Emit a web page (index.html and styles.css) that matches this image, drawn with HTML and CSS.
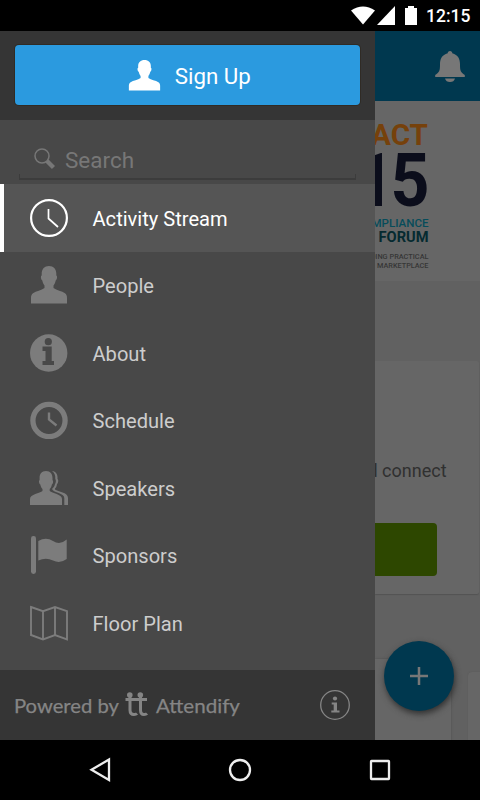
FILE: index.html
```html
<!DOCTYPE html>
<html lang="en">
<head>
<meta charset="utf-8">
<title>Activity Stream</title>
<link rel="stylesheet" href="styles.css">
</head>
<body>
<svg class="defs" aria-hidden="true">
  <symbol id="person" viewBox="0 0 38 38"><path d="M19 0C14.500 0 11.700 3 11.700 7.500V9.500C10.300 10 11 13.800 12.300 14.500C12.900 17 13.500 18.300 14.500 19.500V22C11.500 24.300 6 25 3 27.300C1.300 28.700 1 30 1 32V37.500H37V32C37 30 36.700 28.700 35 27.300C32 25 26.500 24.300 23.500 22V19.500C24.500 18.300 25.100 17 25.700 14.500C27 13.800 27.700 10 26.300 9.500V7.500C26.300 3 23.500 0 19 0Z"/></symbol>
</svg>
<div class="screen">
  <header class="status">
    <svg width="24" height="20" viewBox="0 0 24 20"><path d="M0 4.500Q12-3.500 24 4.500L12 18.500Z"/></svg>
    <svg width="18" height="20" viewBox="0 0 18 20"><path d="M18 0V19H0Z"/></svg>
    <svg width="12" height="20" viewBox="0 0 12 20"><path d="M3 0H9V2H12V19H0V2H3Z"/></svg>
    <span>12:15</span>
  </header>
  <main class="main">
    <aside class="drawer">
      <div class="account">
        <button class="signup"><svg width="33" height="31" viewBox="0 0 38 38" preserveAspectRatio="none"><use href="#person" width="38" height="38"/></svg>Sign Up</button>
      </div>
      <div class="search">
        <div class="field"><svg width="21" height="22" viewBox="0 0 21 22"><circle cx="8" cy="8" r="7" fill="none" stroke="#777" stroke-width="1.500"/><path d="M13 13L19.500 19.500" stroke="#777" stroke-width="4.400" /></svg><span>Search</span></div>
      </div>
      <nav class="menu">
        <div class="item active"><svg viewBox="0 0 38 38"><g fill="none" stroke="currentColor"><circle cx="19" cy="19" r="17.900" stroke-width="2.200"/><path d="M18.500 10V19.500L28 28" stroke-width="1.700"/></g></svg><span>Activity Stream</span></div>
        <div class="item"><svg><use href="#person"/></svg><span>People</span></div>
        <div class="item"><svg viewBox="0 0 38 38"><circle cx="18.700" cy="19" r="18.700"/><g fill="#484848"><circle cx="18.300" cy="7.700" r="3.600"/><path d="M12.500 12.500H21.700V27H24V31H12.500V27H15.500V17H12.500Z"/></g></svg><span>About</span></div>
        <div class="item"><svg viewBox="0 0 38 38"><g fill="none" stroke="currentColor"><circle cx="19" cy="19.500" r="16.100" stroke-width="5.300"/><path d="M19 11.500V18.500L26.500 24.500" stroke-width="2.400"/></g></svg><span>Schedule</span></div>
        <div class="item"><svg viewBox="0 0 38 38"><path d="M16 2C11.500 2 9.600 5 9.600 9V11C8.400 12 9.300 15 10.300 15.600C10.800 18 11.500 19 12.500 20V22C10 24.500 0 25 0 30V36H32V30C32 25 22 24.500 19.700 22V20C20.700 19 21.500 18 21.900 15.600C23 15 23.700 12 22.500 11V9C22.500 5 20.500 2 16 2Z"/><path d="M22 2C26 2.200 28 5.500 27.500 10C29 11 28 14.500 27 15C26.600 18 26 18.500 25 19.500V20.500C28 23 38 23 38 29V36H34.300V29C34.300 24 23.500 23.500 22.300 20.500V19.500C24 18 24.600 17 24.900 15.300C26 14 26.200 11 25.300 10C25.700 6 24 3.500 22 2Z"/></svg><span>Speakers</span></div>
        <div class="item"><svg viewBox="0 0 38 38"><rect x="1" y="0" width="5" height="38" rx="2.400"/><path d="M8.300 5Q16 .500 23 5T36.700 3.500V23Q30 28 23 24.500T8.300 24.500Z"/></svg><span>Sponsors</span></div>
        <div class="item"><svg viewBox="0 0 38 38"><path d="M1 3L13 7.200L25 3L37 7.200V35.500L25 31L13 35.500L1 31ZM13 7.200V35.500M25 3V31" fill="none" stroke="currentColor" stroke-width="1.900"/></svg><span>Floor Plan</span></div>
      </nav>
      <footer class="powered">
        <svg class="brand" width="230" height="40" viewBox="0 0 230 40">
          <text x="0" y="28" textLength="105" lengthAdjust="spacingAndGlyphs">Powered by</text>
          <g fill="none" stroke="currentColor" stroke-width="3"><path d="M111.500 14.500H133M116 11V25Q116 29.500 120 29.500Q122 29.500 123 28.500M126.500 11V25Q126.500 29.500 130 29.500Q132 29.500 133 28.500"/></g>
          <circle cx="115.800" cy="10" r="2.800"/><circle cx="126.300" cy="10" r="2.800"/>
          <text x="142" y="28" textLength="84" lengthAdjust="spacingAndGlyphs">Attendify</text>
        </svg>
        <svg width="30" height="30" viewBox="0 0 30 30"><circle cx="15" cy="15" r="14.300" fill="none" stroke="currentColor" stroke-width="1.300"/><circle cx="15" cy="8.500" r="2.100"/><path d="M11.700 12.500H17V20.500H19.500V22.500H11.300V20.500H13.700V14.500H11.700Z"/></svg>
      </footer>
    </aside>
    <section class="content">
      <div class="toolbar"><svg width="30" height="32" viewBox="0 0 30 32"><path d="M15 0C16.500 0 17.300 1 17.300 2.300C23 4 25 8 25 13C25 20 25.500 21 29.800 24V26H.200V24C4.500 21 5 20 5 13C5 8 7 4 12.700 2.300C12.700 1 13.500 0 15 0ZM10 27.500H20Q19 31 15 31T10 27.500Z"/></svg></div>
      <div class="banner">
        <svg width="105" height="180" viewBox="0 0 105 180">
          <text class="year"><tspan x="-22" y="105">1</tspan><tspan x="15.500" y="105" textLength="39" lengthAdjust="spacingAndGlyphs">5</tspan></text>
          <g text-anchor="end">
            <text class="orange" x="53" y="43.500" textLength="57" lengthAdjust="spacingAndGlyphs">ACT</text>
            <text class="teal" x="53.500" y="125.500" textLength="65" lengthAdjust="spacingAndGlyphs">OMPLIANCE</text>
            <text class="forum" x="53.500" y="140.500" textLength="50" lengthAdjust="spacingAndGlyphs">FORUM</text>
            <text class="small" x="53.500" y="158" textLength="58" lengthAdjust="spacingAndGlyphs">DING PRACTICAL</text>
            <text class="small" x="53.500" y="166.500" textLength="51.500" lengthAdjust="spacingAndGlyphs">MARKETPLACE</text>
          </g>
        </svg>
      </div>
      <div class="card welcome"><p>d connect</p><div class="green"></div></div>
      <div class="next"><div class="card left"></div><div class="card right"></div></div>
      <button class="fab"><svg width="18" height="18" viewBox="0 0 18 18"><path d="M9 0V18M0 9H18" stroke="#777" stroke-width="2.500"/></svg></button>
    </section>
  </main>
  <footer class="navbar">
    <svg width="22" height="26" viewBox="0 0 22 26"><path d="M20 2.500V23L2.500 12.800Z"/></svg>
    <svg width="24" height="26" viewBox="0 0 24 26"><circle cx="12" cy="13" r="10"/></svg>
    <svg width="22" height="26" viewBox="0 0 22 26"><rect x="2" y="4" width="18" height="18" rx=".500"/></svg>
  </footer>
</div>
</body>
</html>
```
FILE: styles.css
```css
* { box-sizing: border-box; }
body { margin: 0; font-family: Roboto, sans-serif; background: #000; }
svg { fill: currentColor; flex: none; display: block; }
button { border: 0; padding: 0; font: inherit; }
.defs { display: none; }
.screen { width: 480px; height: 800px; display: grid; grid-template-rows: 31px 709px 60px; overflow: hidden; }
.status { display: flex; justify-content: flex-end; align-items: flex-start; padding: 6px 10px 0 0; color: #fff; }
.status svg:nth-child(2) { margin-left: 2px; }
.status svg:nth-child(3) { margin-left: 10px; }
.status span { font-size: 17.500px; font-weight: 500; line-height: 21px; margin-left: 9px; width: 44px; }
.main { display: grid; grid-template-columns: 375px 105px; }
.drawer { display: grid; grid-template-rows: 89px 64px 486px 70px; background: #484848; }
.account { background: #353535; padding: 14px 15px 15px; }
.signup { width: 100%; height: 60px; border-radius: 4px; background: #2b9adf; color: #fff; font-size: 22.300px; display: flex; align-items: center; justify-content: center; gap: 13.500px; padding: 1px 0 0 4px; box-shadow: 0 0 0 1px #302b25; }
.signup svg { margin-top: -1px; }
.search { padding: 24px 19px 4px; }
.field { height: 36px; display: flex; align-items: center; padding: 0 0 2px 15px; color: #777; font-size: 22.500px; gap: 10px; border-bottom: 2px solid #3c3c3c; position: relative; }
.field svg { margin-top: -2px; }
.field::after { content: ""; position: absolute; inset: auto 0 0; height: 4px; border: solid #3c3c3c; border-width: 0 1px; }
.menu { display: flex; flex-direction: column; }
.item { flex: none; height: 67.500px; display: flex; align-items: center; padding-left: 30px; color: #7c7c7c; }
.item svg { width: 38px; height: 38px; }
.item span { margin-left: 24.500px; color: #cdcdcd; font-size: 20.100px; line-height: 26px; padding-top: 2px; }
.active { background: #555; color: #fff; border-left: 4px solid #fff; padding-left: 26px; height: 68px; margin-bottom: -.500px; }
.active span { color: #fff; }
.powered { background: #353535; color: #858585; display: flex; align-items: center; justify-content: space-between; padding: 0 25px 0 14px; }
.brand text { font: 19.500px Lato, sans-serif; stroke: currentColor; stroke-width: .25px; }
.content { background: #616161; position: relative; overflow: hidden; }
.toolbar { height: 70px; background: #00384f; color: #777; display: flex; justify-content: flex-end; padding: 20px 15px 0 0; }
.banner { height: 180px; background: #666; margin-bottom: 80px; }
.banner text { font-family: Roboto, sans-serif; font-weight: 700; }
.banner .orange { font-size: 30px; fill: #76410b; }
.banner .year { font-size: 74px; fill: #0b0d1b; }
.banner .teal { font-size: 11.500px; font-weight: 500; fill: #064c5a; }
.banner .forum { font-size: 15.500px; fill: #052a30; }
.banner .small { font-size: 7.300px; font-weight: 500; fill: #363636; }
.card { background: #666; box-shadow: 0 1px 1px #545454; }
.welcome { width: 104px; height: 233px; border-radius: 0 2px 2px 0; display: flex; flex-direction: column; align-items: flex-start; }
.welcome p { margin: 98px 0 40px -7.500px; width: 80px; color: #303030; font-size: 18px; line-height: 24px; white-space: nowrap; }
.green { width: 62px; height: 53px; background: #2d4700; border-radius: 0 4px 4px 0; }
.next { display: flex; margin-top: 65px; justify-content: space-between; }
.left { width: 76px; height: 100px; box-shadow: 0 0 2px #505050; }
.right { width: 12px; height: 100px; margin-top: 13px; border-radius: 4px 0 0; box-shadow: 0 0 1px #555; }
.fab { position: absolute; left: 9px; bottom: 29px; width: 70px; height: 70px; border-radius: 50%; background: #00384f; display: grid; place-items: center; box-shadow: 1px 3px 6px #303030; }
.navbar { background: #000; display: flex; justify-content: space-between; align-items: center; padding: 0 89px; }
.navbar svg { fill: none; stroke: #eee; stroke-width: 2.300; }
```
